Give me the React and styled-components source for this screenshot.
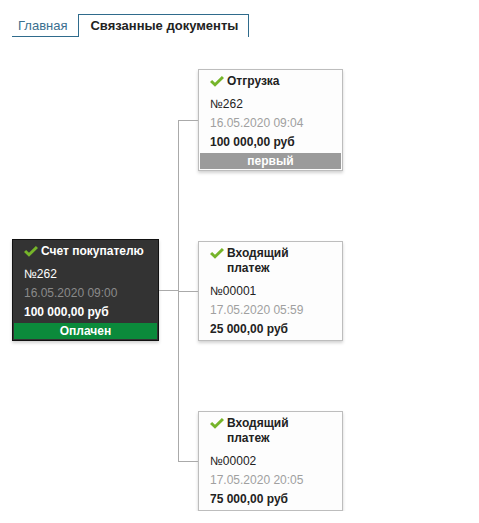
import React from "react";
import styled, { createGlobalStyle } from "styled-components";

const GlobalStyle = createGlobalStyle`
  body {
    margin: 0;
    background: #fff;
    font-family: "Liberation Sans", Arial, sans-serif;
    font-size: 12px;
    color: #222;
  }
`;

const Page = styled.div`
  padding: 14px 12px 0;
`;

const Tabs = styled.div`
  display: flex;
  align-items: flex-end;
`;

const Tab = styled.div`
  font-size: 13px;
  padding: ${(p) => (p.$active ? "0 10px 0 11px" : "0 11px 0 6px")};
  line-height: ${(p) => (p.$active ? "22px" : "20px")};
  font-weight: ${(p) => (p.$active ? "bold" : "normal")};
  color: ${(p) => (p.$active ? "#222" : "#3b6f8f")};
  border: 1px solid #2f6b8c;
  border-width: ${(p) => (p.$active ? "1px 1px 0 1px" : "0 0 1px 0")};
  cursor: pointer;
`;

const Tree = styled.div`
  display: flex;
  align-items: center;
  margin-top: 32px;
`;

const Branches = styled.div`
  display: flex;
  flex-direction: column;
  gap: 70px;
  margin-left: 39px;
`;

const Card = styled.div`
  position: relative;
  box-sizing: border-box;
  width: ${(p) => (p.$root ? "147px" : "145px")};
  padding: 0 1px 1px;
  background: ${(p) => (p.$root ? "#333" : "#fdfdfd")};
  border: 1px solid ${(p) => (p.$root ? "#111" : "#bdbdbd")};
  box-shadow: 0 2px 3px rgba(0, 0, 0, 0.18);
  color: ${(p) => (p.$root ? "#fff" : "#222")};

  ${(p) =>
    p.$root &&
    `
    &::after {
      content: "";
      position: absolute;
      right: -21px;
      top: 50%;
      width: 20px;
      height: 1px;
      background: #aaa;
    }
  `}

  ${(p) =>
    !p.$root &&
    `
    &::before {
      content: "";
      position: absolute;
      left: -21px;
      top: 50%;
      width: 20px;
      height: 1px;
      background: #aaa;
    }
    &::after {
      content: "";
      position: absolute;
      left: -21px;
      width: 1px;
      background: #aaa;
      top: -36px;
      bottom: -36px;
    }
    &:first-child::after { top: 50%; }
    &:last-child::after { bottom: 50%; }
  `}
`;

const Body = styled.div`
  padding: 4px 10px 0;
`;

const Title = styled.div`
  display: flex;
  align-items: flex-start;
  gap: 3px;
  font-weight: bold;
  line-height: 15px;
  margin-bottom: 6px;
`;

const Check = styled.svg`
  flex: none;
  width: 14px;
  height: 11px;
  margin-top: 2px;
`;

const Line = styled.div`
  line-height: 19px;
  white-space: nowrap;
  color: ${(p) => p.$color || "inherit"};
  font-weight: ${(p) => (p.$bold ? "bold" : "normal")};
`;

const Status = styled.div`
  margin-top: 1px;
  height: 16px;
  line-height: 16px;
  text-align: center;
  font-weight: bold;
  color: #fff;
  background: ${(p) => p.$bg};
`;

const CheckIcon = () => (
  <Check viewBox="0 0 14 11">
    <path d="M0 6 L2.1 4 L5 6.7 L11.9 0 L14 2 L5 10.8 Z" fill="#76b52a" />
  </Check>
);

const DocCard = ({ root, title, number, date, amount, status, statusBg }) => (
  <Card $root={root}>
    <Body>
      <Title>
        <CheckIcon />
        <span>{title}</span>
      </Title>
      <Line>{number}</Line>
      <Line $color={root ? "#8a8a8a" : "#a0a0a0"}>{date}</Line>
      <Line $bold>{amount}</Line>
    </Body>
    {status && <Status $bg={statusBg}>{status}</Status>}
  </Card>
);

const children = [
  {
    title: "Отгрузка",
    number: "№262",
    date: "16.05.2020 09:04",
    amount: "100 000,00 руб",
    status: "первый",
    statusBg: "#9b9b9b",
  },
  {
    title: "Входящий платеж",
    number: "№00001",
    date: "17.05.2020 05:59",
    amount: "25 000,00 руб",
  },
  {
    title: "Входящий платеж",
    number: "№00002",
    date: "17.05.2020 20:05",
    amount: "75 000,00 руб",
  },
];

export default function App() {
  return (
    <>
      <GlobalStyle />
      <Page>
        <Tabs>
          <Tab>Главная</Tab>
          <Tab $active>Связанные документы</Tab>
        </Tabs>
        <Tree>
          <DocCard
            root
            title="Счет покупателю"
            number="№262"
            date="16.05.2020 09:00"
            amount="100 000,00 руб"
            status="Оплачен"
            statusBg="#0b8a3b"
          />
          <Branches>
            {children.map((c, i) => (
              <DocCard key={i} {...c} />
            ))}
          </Branches>
        </Tree>
      </Page>
    </>
  );
}
